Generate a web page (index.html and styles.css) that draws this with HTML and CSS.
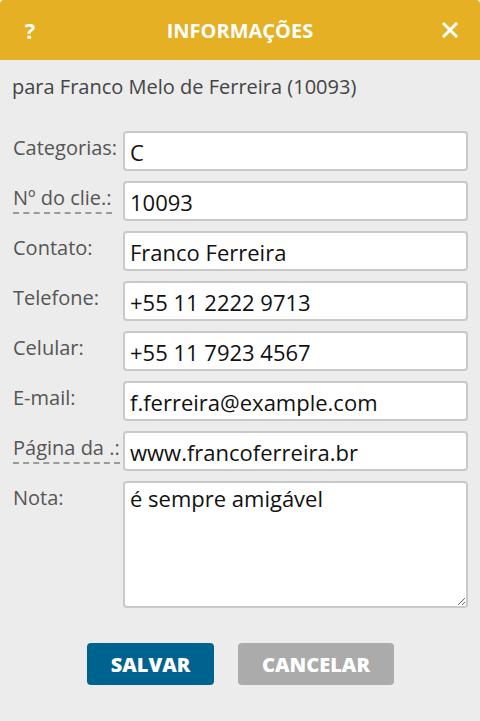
FILE: index.html
```html
<!DOCTYPE html>
<html lang="pt">
<head>
<meta charset="utf-8">
<link rel="stylesheet" href="styles.css">
</head>
<body>
<div class="dialog">
  <div class="header">
    <span class="hbtn help">?</span>
    <span class="title">INFORMAÇÕES</span>
    <span class="hbtn close">
      <svg width="16" height="16" viewBox="0 0 16 16"><path d="M2 2L14 14M14 2L2 14" stroke="#fff" stroke-width="3" stroke-linecap="square"/></svg>
    </span>
  </div>
  <div class="sub">para Franco Melo de Ferreira (10093)</div>
  <form class="form">
    <label class="lbl">Categorias:</label><input class="inp" value="C">
    <label class="lbl"><span class="dash">Nº do clie.:</span></label><input class="inp" value="10093">
    <label class="lbl">Contato:</label><input class="inp" value="Franco Ferreira">
    <label class="lbl">Telefone:</label><input class="inp" value="+55 11 2222 9713">
    <label class="lbl">Celular:</label><input class="inp" value="+55 11 7923 4567">
    <label class="lbl">E-mail:</label><input class="inp" value="f.ferreira@example.com">
    <label class="lbl"><span class="dash">Página da .:</span></label><input class="inp" value="www.francoferreira.br">
    <label class="lbl">Nota:</label><textarea class="inp ta">é sempre amigável</textarea>
  </form>
  <div class="buttons">
    <button class="btn save" type="button">SALVAR</button>
    <button class="btn cancel" type="button">CANCELAR</button>
  </div>
</div>
</body>
</html>
```
FILE: styles.css
```css
html, body {
  margin: 0;
  padding: 0;
  background: #fff;
}
body {
  font-family: "Open Sans", "Noto Sans", sans-serif;
  width: 480px;
  height: 721px;
  overflow: hidden;
}
.dialog {
  width: 480px;
  height: 721px;
  background: #ececec;
  border-radius: 4px 4px 0 0;
  overflow: hidden;
}
.header {
  height: 60px;
  background: #e5b023;
  display: flex;
  align-items: center;
  justify-content: space-between;
  padding: 0 21px 0 21px;
  color: #fff;
}
.hbtn {
  width: 18px;
  display: flex;
  justify-content: center;
  align-items: center;
  font-weight: 700;
  font-size: 22px;
}
.title {
  font-weight: 700;
  font-size: 20px;
}
.sub {
  padding: 13px 0 0 12px;
  height: 40px;
  box-sizing: border-box;
  font-size: 20px;
  line-height: 27px;
  color: #444;
}
.form {
  margin-top: 31px;
  display: grid;
  grid-template-columns: 110px 345px;
  row-gap: 10px;
  padding-left: 13px;
}
.lbl {
  font-size: 20px;
  line-height: 27px;
  color: #555;
  padding-top: 3px;
  white-space: nowrap;
}
.dash {
  border-bottom: 2px dashed #9a9a9a;
  padding-bottom: 1px;
}
.inp {
  box-sizing: border-box;
  height: 40px;
  width: 345px;
  border: 2px solid #c9c9c9;
  border-radius: 4px;
  background: #fff;
  font-family: "Open Sans", "Noto Sans", sans-serif;
  font-size: 22px;
  color: #111;
  padding: 2px 5px 0;
  outline: none;
}
.ta {
  height: 127px;
  resize: vertical;
  padding: 0 5px;
  line-height: 30px;
}
.buttons {
  display: flex;
  justify-content: center;
  gap: 24px;
  margin-top: 35px;
  padding-left: 1px;
}
.btn {
  height: 42px;
  border: 0;
  border-radius: 4px;
  color: #fff;
  font-family: "Open Sans", "Noto Sans", sans-serif;
  font-weight: 800;
  font-size: 20px;
  padding: 0;
}
.save {
  width: 127px;
  background: #00628f;
}
.cancel {
  width: 156px;
  background: #ababab;
}
```
